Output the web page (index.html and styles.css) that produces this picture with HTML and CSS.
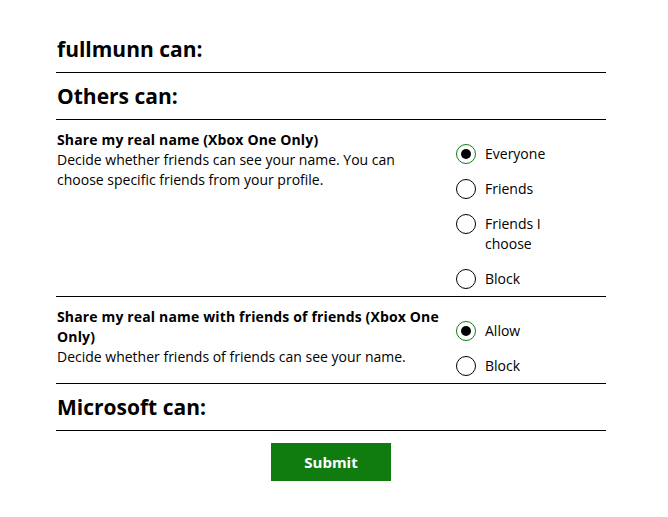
FILE: index.html
```html
<!DOCTYPE html>
<html>
<head>
<meta charset="utf-8">
<link rel="stylesheet" href="styles.css">
</head>
<body>
<div class="page">
  <h2 class="section-head">fullmunn can:</h2>
  <h2 class="section-head">Others can:</h2>

  <div class="setting">
    <div class="setting-text">
      <div class="setting-title">Share my real name (Xbox One Only)</div>
      <div class="setting-desc">Decide whether friends can see your name. You can choose specific friends from your profile.</div>
    </div>
    <div class="options">
      <div class="option"><span class="radio checked"></span><span class="option-label">Everyone</span></div>
      <div class="option"><span class="radio"></span><span class="option-label">Friends</span></div>
      <div class="option"><span class="radio"></span><span class="option-label">Friends I choose</span></div>
      <div class="option"><span class="radio"></span><span class="option-label">Block</span></div>
    </div>
  </div>

  <div class="setting">
    <div class="setting-text">
      <div class="setting-title">Share my real name with friends of friends (Xbox One Only)</div>
      <div class="setting-desc">Decide whether friends of friends can see your name.</div>
    </div>
    <div class="options">
      <div class="option"><span class="radio checked"></span><span class="option-label">Allow</span></div>
      <div class="option"><span class="radio"></span><span class="option-label">Block</span></div>
    </div>
  </div>

  <h2 class="section-head">Microsoft can:</h2>

  <div class="actions">
    <button class="submit" type="button">Submit</button>
  </div>
</div>
</body>
</html>
```
FILE: styles.css
```css
html, body {
  margin: 0;
  padding: 0;
  background: #fff;
}
body {
  font-family: "Open Sans", "Noto Sans", sans-serif;
  color: #000;
}
.page {
  width: 550px;
  margin-left: 56px;
  padding-top: 26px;
}
.section-head {
  margin: 0;
  font-size: 21px;
  font-weight: 700;
  line-height: 28px;
  padding: 9px 0 9px 1px;
  border-bottom: 1px solid #000;
}
.setting {
  display: grid;
  grid-template-columns: 400px 1fr;
  border-bottom: 1px solid #000;
}
.setting-text {
  width: 385px;
  padding: 10px 0 0 1px;
  font-size: 14px;
  line-height: 20px;
}
.setting-title {
  font-weight: 700;
  letter-spacing: 0.15px;
}
.options {
  padding: 24px 0 7px 0;
  display: flex;
  flex-direction: column;
  gap: 15px;
}
.option {
  display: flex;
  align-items: flex-start;
  gap: 9px;
  font-size: 14px;
  line-height: 20px;
}
.option-label {
  max-width: 80px;
}
.radio {
  flex: none;
  box-sizing: border-box;
  width: 20px;
  height: 20px;
  border: 1px solid #000;
  border-radius: 50%;
  position: relative;
}
.radio.checked {
  border-color: #107c10;
}
.radio.checked::after {
  content: "";
  position: absolute;
  left: 4px;
  top: 4px;
  width: 10px;
  height: 10px;
  border-radius: 50%;
  background: #000;
}
.actions {
  display: flex;
  justify-content: center;
  padding-top: 12px;
}
.submit {
  width: 120px;
  height: 38px;
  border: 0;
  background: #107c10;
  color: #fff;
  font-family: "Open Sans", "Noto Sans", sans-serif;
  font-weight: 700;
  font-size: 15px;
  line-height: 36px;
}
```
